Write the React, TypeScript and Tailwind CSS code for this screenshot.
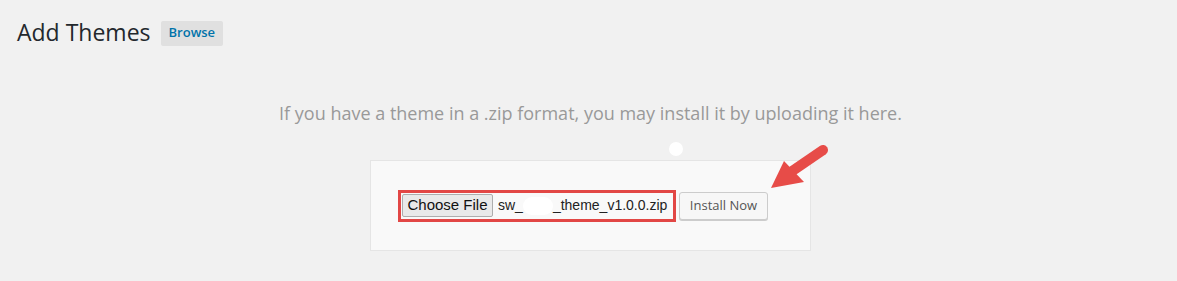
export default function App() {
  return (
    <div className="relative h-[281px] w-full overflow-hidden bg-[#f1f1f1] font-['Open_Sans',sans-serif]">
      <div className="flex items-center gap-[10px] pl-[17px] pt-[18px]">
        <h1 className="text-[23px] leading-[28px] text-[#23282d]">Add Themes</h1>
        <span className="mt-[2px] flex h-[25px] items-center rounded-[2px] bg-[#e0e0e0] px-[8px] text-[13px] font-semibold text-[#0073aa]">
          Browse
        </span>
      </div>

      <div className="flex flex-col items-center pl-[4px] pt-[55px]">
        <p className="text-[18px] leading-[24px] text-[#999999]">
          If you have a theme in a .zip format, you may install it by uploading it here.
        </p>

        <div className="mt-[35px] flex h-[91px] w-[441px] items-center border border-[#e5e5e5] bg-[#f9f9f9] pl-[27px]">
          <div className="flex h-[32px] w-[278px] shrink-0 items-center border-[3px] border-[#e24745] pl-[1px] font-['Liberation_Sans',Arial,sans-serif]">
            <span className="flex h-[23px] w-[91px] shrink-0 items-center justify-center rounded-[2px] border border-[#adadad] bg-[#e9e9e9] text-[15px] text-[#111]">
              Choose File
            </span>
            <span className="ml-[5px] flex items-center whitespace-nowrap text-[14px] text-[#222]">
              sw_
              <span className="inline-block h-[18px] w-[30px] rounded-full bg-white" />
              _theme_v1.0.0.zip
            </span>
          </div>
          <span className="ml-[3px] flex h-[28px] w-[89px] shrink-0 items-center justify-center rounded-[3px] border border-[#cccccc] bg-[#f7f7f7] text-[13px] text-[#555] shadow-[0_1px_0_#ccc]">
            Install Now
          </span>
        </div>
      </div>

      <span className="absolute left-[669px] top-[142px] h-[14px] w-[14px] rounded-full bg-white" />

      <svg className="absolute left-[760px] top-[135px]" width="80" height="65" viewBox="0 0 80 65">
        <line x1="63" y1="15" x2="25" y2="41" stroke="#e74c48" strokeWidth="10" strokeLinecap="round" />
        <polygon points="11,53 24,26 44,47" fill="#e74c48" />
      </svg>
    </div>
  );
}
